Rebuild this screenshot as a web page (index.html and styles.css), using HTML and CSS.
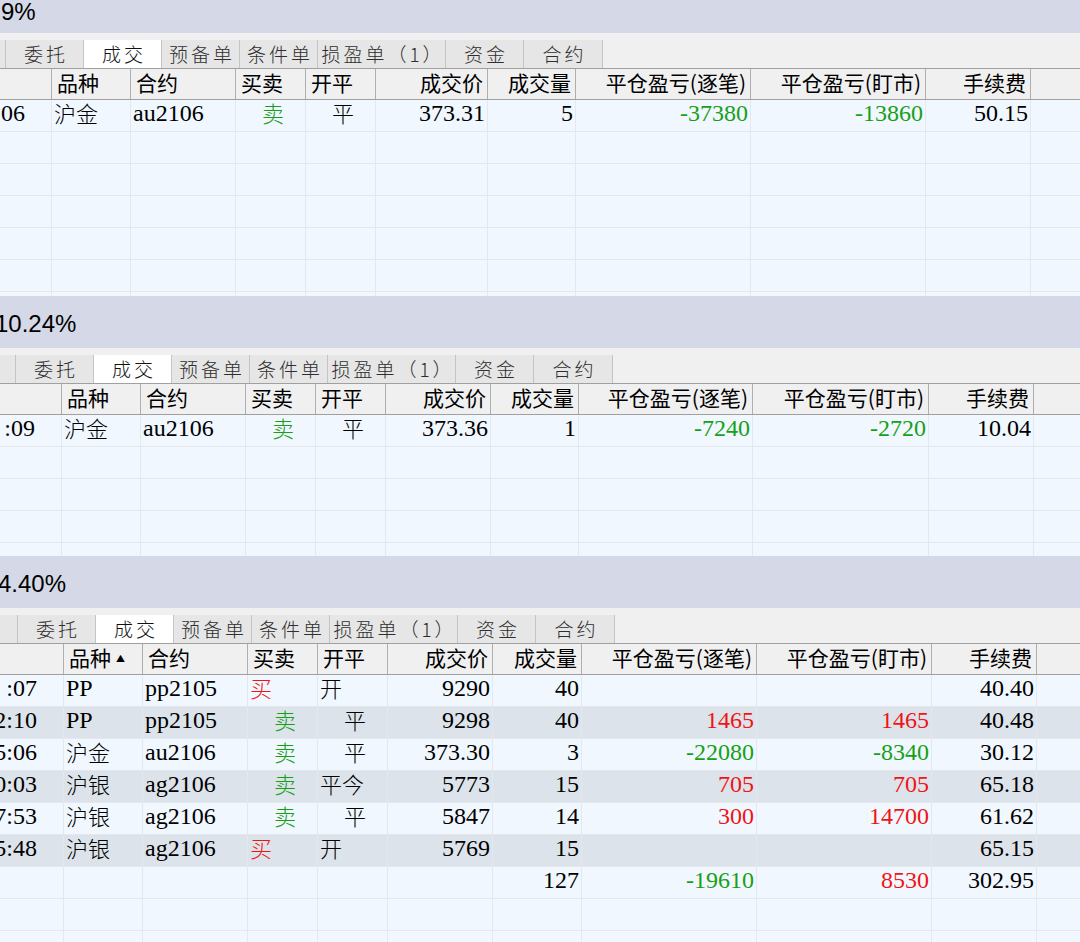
FILE: index.html
```html
<!DOCTYPE html>
<html lang="zh-CN">
<head>
<meta charset="utf-8">
<title>成交</title>
<link rel="stylesheet" href="styles.css">
</head>
<body>
<div class="screen">

  <section class="panel p1">
    <div class="band"><span class="band-text">9%</span></div>
    <div class="scroll">
      <div class="inner">
        <div class="strip"></div>
        <div class="tabs">
          <div class="tab"></div>
          <div class="tab">委托</div>
          <div class="tab active">成交</div>
          <div class="tab">预备单</div>
          <div class="tab">条件单</div>
          <div class="tab wide">损盈单（1）</div>
          <div class="tab">资金</div>
          <div class="tab last">合约</div>
        </div>
        <div class="row head">
          <div class="h"></div><div class="h l">品种</div><div class="h l">合约</div><div class="h l">买卖</div><div class="h l">开平</div><div class="h r">成交价</div><div class="h r">成交量</div><div class="h r">平仓盈亏(逐笔)</div><div class="h r">平仓盈亏(盯市)</div><div class="h r">手续费</div><div class="f"></div>
        </div>
        <div class="row">
          <div class="d t">06</div><div class="d c l">沪金</div><div class="d l">au2106</div><div class="d c ind green">卖</div><div class="d c ind">平</div><div class="d r">373.31</div><div class="d r">5</div><div class="d r green">-37380</div><div class="d r green">-13860</div><div class="d r">50.15</div><div class="f"></div>
        </div>
        <div class="row"><div class="d"></div><div class="d"></div><div class="d"></div><div class="d"></div><div class="d"></div><div class="d"></div><div class="d"></div><div class="d"></div><div class="d"></div><div class="d"></div><div class="f"></div></div>
        <div class="row"><div class="d"></div><div class="d"></div><div class="d"></div><div class="d"></div><div class="d"></div><div class="d"></div><div class="d"></div><div class="d"></div><div class="d"></div><div class="d"></div><div class="f"></div></div>
        <div class="row"><div class="d"></div><div class="d"></div><div class="d"></div><div class="d"></div><div class="d"></div><div class="d"></div><div class="d"></div><div class="d"></div><div class="d"></div><div class="d"></div><div class="f"></div></div>
        <div class="row"><div class="d"></div><div class="d"></div><div class="d"></div><div class="d"></div><div class="d"></div><div class="d"></div><div class="d"></div><div class="d"></div><div class="d"></div><div class="d"></div><div class="f"></div></div>
        <div class="row"><div class="d"></div><div class="d"></div><div class="d"></div><div class="d"></div><div class="d"></div><div class="d"></div><div class="d"></div><div class="d"></div><div class="d"></div><div class="d"></div><div class="f"></div></div>
        <div class="row"><div class="d"></div><div class="d"></div><div class="d"></div><div class="d"></div><div class="d"></div><div class="d"></div><div class="d"></div><div class="d"></div><div class="d"></div><div class="d"></div><div class="f"></div></div>
      </div>
    </div>
  </section>

  <section class="panel p2">
    <div class="band"><span class="band-text">10.24%</span></div>
    <div class="scroll">
      <div class="inner">
        <div class="strip"></div>
        <div class="tabs">
          <div class="tab"></div>
          <div class="tab">委托</div>
          <div class="tab active">成交</div>
          <div class="tab">预备单</div>
          <div class="tab">条件单</div>
          <div class="tab wide">损盈单（1）</div>
          <div class="tab">资金</div>
          <div class="tab last">合约</div>
        </div>
        <div class="row head">
          <div class="h"></div><div class="h l">品种</div><div class="h l">合约</div><div class="h l">买卖</div><div class="h l">开平</div><div class="h r">成交价</div><div class="h r">成交量</div><div class="h r">平仓盈亏(逐笔)</div><div class="h r">平仓盈亏(盯市)</div><div class="h r">手续费</div><div class="f"></div>
        </div>
        <div class="row">
          <div class="d t">:09</div><div class="d c l">沪金</div><div class="d l">au2106</div><div class="d c ind green">卖</div><div class="d c ind">平</div><div class="d r">373.36</div><div class="d r">1</div><div class="d r green">-7240</div><div class="d r green">-2720</div><div class="d r">10.04</div><div class="f"></div>
        </div>
        <div class="row"><div class="d"></div><div class="d"></div><div class="d"></div><div class="d"></div><div class="d"></div><div class="d"></div><div class="d"></div><div class="d"></div><div class="d"></div><div class="d"></div><div class="f"></div></div>
        <div class="row"><div class="d"></div><div class="d"></div><div class="d"></div><div class="d"></div><div class="d"></div><div class="d"></div><div class="d"></div><div class="d"></div><div class="d"></div><div class="d"></div><div class="f"></div></div>
        <div class="row"><div class="d"></div><div class="d"></div><div class="d"></div><div class="d"></div><div class="d"></div><div class="d"></div><div class="d"></div><div class="d"></div><div class="d"></div><div class="d"></div><div class="f"></div></div>
        <div class="row"><div class="d"></div><div class="d"></div><div class="d"></div><div class="d"></div><div class="d"></div><div class="d"></div><div class="d"></div><div class="d"></div><div class="d"></div><div class="d"></div><div class="f"></div></div>
      </div>
    </div>
  </section>

  <section class="panel p3">
    <div class="band"><span class="band-text">4.40%</span></div>
    <div class="scroll">
      <div class="inner">
        <div class="strip"></div>
        <div class="tabs">
          <div class="tab"></div>
          <div class="tab">委托</div>
          <div class="tab active">成交</div>
          <div class="tab">预备单</div>
          <div class="tab">条件单</div>
          <div class="tab wide">损盈单（1）</div>
          <div class="tab">资金</div>
          <div class="tab last">合约</div>
        </div>
        <div class="row head">
          <div class="h"></div><div class="h l">品种<span class="sort">▲</span></div><div class="h l">合约</div><div class="h l">买卖</div><div class="h l">开平</div><div class="h r">成交价</div><div class="h r">成交量</div><div class="h r">平仓盈亏(逐笔)</div><div class="h r">平仓盈亏(盯市)</div><div class="h r">手续费</div><div class="f"></div>
        </div>
        <div class="row">
          <div class="d t">:07</div><div class="d l">PP</div><div class="d l">pp2105</div><div class="d c l red">买</div><div class="d c l">开</div><div class="d r">9290</div><div class="d r">40</div><div class="d r"></div><div class="d r"></div><div class="d r">40.40</div><div class="f"></div>
        </div>
        <div class="row alt">
          <div class="d t">2:10</div><div class="d l">PP</div><div class="d l">pp2105</div><div class="d c ind green">卖</div><div class="d c ind">平</div><div class="d r">9298</div><div class="d r">40</div><div class="d r red">1465</div><div class="d r red">1465</div><div class="d r">40.48</div><div class="f"></div>
        </div>
        <div class="row">
          <div class="d t">5:06</div><div class="d c l">沪金</div><div class="d l">au2106</div><div class="d c ind green">卖</div><div class="d c ind">平</div><div class="d r">373.30</div><div class="d r">3</div><div class="d r green">-22080</div><div class="d r green">-8340</div><div class="d r">30.12</div><div class="f"></div>
        </div>
        <div class="row alt">
          <div class="d t">0:03</div><div class="d c l">沪银</div><div class="d l">ag2106</div><div class="d c ind green">卖</div><div class="d c l">平今</div><div class="d r">5773</div><div class="d r">15</div><div class="d r red">705</div><div class="d r red">705</div><div class="d r">65.18</div><div class="f"></div>
        </div>
        <div class="row">
          <div class="d t">7:53</div><div class="d c l">沪银</div><div class="d l">ag2106</div><div class="d c ind green">卖</div><div class="d c ind">平</div><div class="d r">5847</div><div class="d r">14</div><div class="d r red">300</div><div class="d r red">14700</div><div class="d r">61.62</div><div class="f"></div>
        </div>
        <div class="row alt">
          <div class="d t">5:48</div><div class="d c l">沪银</div><div class="d l">ag2106</div><div class="d c l red">买</div><div class="d c l">开</div><div class="d r">5769</div><div class="d r">15</div><div class="d r"></div><div class="d r"></div><div class="d r">65.15</div><div class="f"></div>
        </div>
        <div class="row">
          <div class="d"></div><div class="d"></div><div class="d"></div><div class="d"></div><div class="d"></div><div class="d"></div><div class="d r">127</div><div class="d r green">-19610</div><div class="d r red">8530</div><div class="d r">302.95</div><div class="f"></div>
        </div>
        <div class="row"><div class="d"></div><div class="d"></div><div class="d"></div><div class="d"></div><div class="d"></div><div class="d"></div><div class="d"></div><div class="d"></div><div class="d"></div><div class="d"></div><div class="f"></div></div>
        <div class="row"><div class="d"></div><div class="d"></div><div class="d"></div><div class="d"></div><div class="d"></div><div class="d"></div><div class="d"></div><div class="d"></div><div class="d"></div><div class="d"></div><div class="f"></div></div>
      </div>
    </div>
  </section>

</div>
</body>
</html>
```
FILE: styles.css
```css
* { box-sizing: border-box; }

html, body {
  margin: 0;
  padding: 0;
}

body {
  width: 1080px;
  height: 942px;
  overflow: hidden;
  background: #f0f7fe;
  font-family: "Noto Sans CJK SC", sans-serif;
  color: #000;
}

.screen {
  display: flex;
  flex-direction: column;
  height: 942px;
  overflow: hidden;
}

.panel {
  flex: none;
  overflow: hidden;
  background: #f0f7fe;
}

.p1 { margin-top: -19px; height: 315px; }
.p2 { height: 260px; }
.p3 { flex: 1 1 auto; }

/* summary band */
.band {
  height: 52px;
  padding-top: 17px;
  background: #d5d8e6;
  font-family: "Liberation Sans", Arial, sans-serif;
  font-size: 24px;
  line-height: 22px;
  white-space: nowrap;
}

.p1 .band { padding-top: 20px; }

.band-text { display: inline-block; }
.p1 .band-text { margin-left: 1px; }
.p2 .band-text { margin-left: -5px; }
.p3 .band-text { margin-left: -2px; }

/* horizontally scrolled content */
.scroll { overflow: hidden; }
.p1 .inner { margin-left: -72px; width: calc(100% + 72px); }
.p2 .inner { margin-left: -62px; width: calc(100% + 62px); }
.p3 .inner { margin-left: -60px; width: calc(100% + 60px); }

.strip {
  height: 7px;
  background: #f0f0f0;
}

/* tabs */
.tabs {
  display: flex;
  height: 29px;
  background: #f0f0f0;
  border-bottom: 1px solid #a0a0a0;
}

.tab {
  flex: none;
  width: 78px;
  height: 28px;
  padding-left: 3px;
  background: #e6e6e6;
  border-right: 1px solid #c4c4c4;
  text-align: center;
  font-size: 19px;
  font-weight: 300;
  line-height: 28px;
  letter-spacing: 3px;
  color: #2e2e2e;
  white-space: nowrap;
}

.tab.wide { width: 128px; }
.tab.last { width: 79px; }
.tab.active { background: #fff; color: #111; }

/* grid rows */
.row {
  display: grid;
  height: 32px;
  border-bottom: 1px solid #e4e7eb;
}

.p1 .row { grid-template-columns: 124px 79px 105px 70px 70px 112px 88px 175px 175px 105px 1fr; }
.p2 .row { grid-template-columns: 124px 79px 105px 70px 70px 105px 88px 174px 176px 105px 1fr; }
.p3 .row { grid-template-columns: 124px 79px 105px 70px 70px 105px 89px 175px 175px 105px 1fr; }

.row.alt { background: #dde3ea; }

.row.head {
  height: 31px;
  background: #f0f0f0;
  border-bottom: 1px solid #a0a0a0;
}

.h {
  border-right: 1px solid #aeaeae;
  font-family: "Noto Sans CJK SC", sans-serif;
  font-size: 21px;
  line-height: 26px;
  white-space: nowrap;
}

.h.l { padding-left: 5px; }
.h.r { padding-right: 4px; text-align: right; }

.sort {
  font-size: 9px;
  vertical-align: 4px;
  margin-left: 5px;
}

.d {
  border-right: 1px solid #e4e7eb;
  font-family: "Liberation Serif", "Noto Sans CJK SC", serif;
  font-size: 24px;
  line-height: 26px;
  white-space: nowrap;
}

.d.c {
  font-family: "Noto Sans CJK SC", sans-serif;
  font-size: 22px;
  font-weight: 300;
  line-height: 24px;
}

.d.l { padding-left: 2px; }
.d.r { padding-right: 2px; text-align: right; }
.d.ind { padding-left: 26px; }
.d.c.l { padding-left: 2px; }
.d.t { padding-right: 26px; text-align: right; }

.green { color: #17a017; }
.red { color: #f01414; }
```
